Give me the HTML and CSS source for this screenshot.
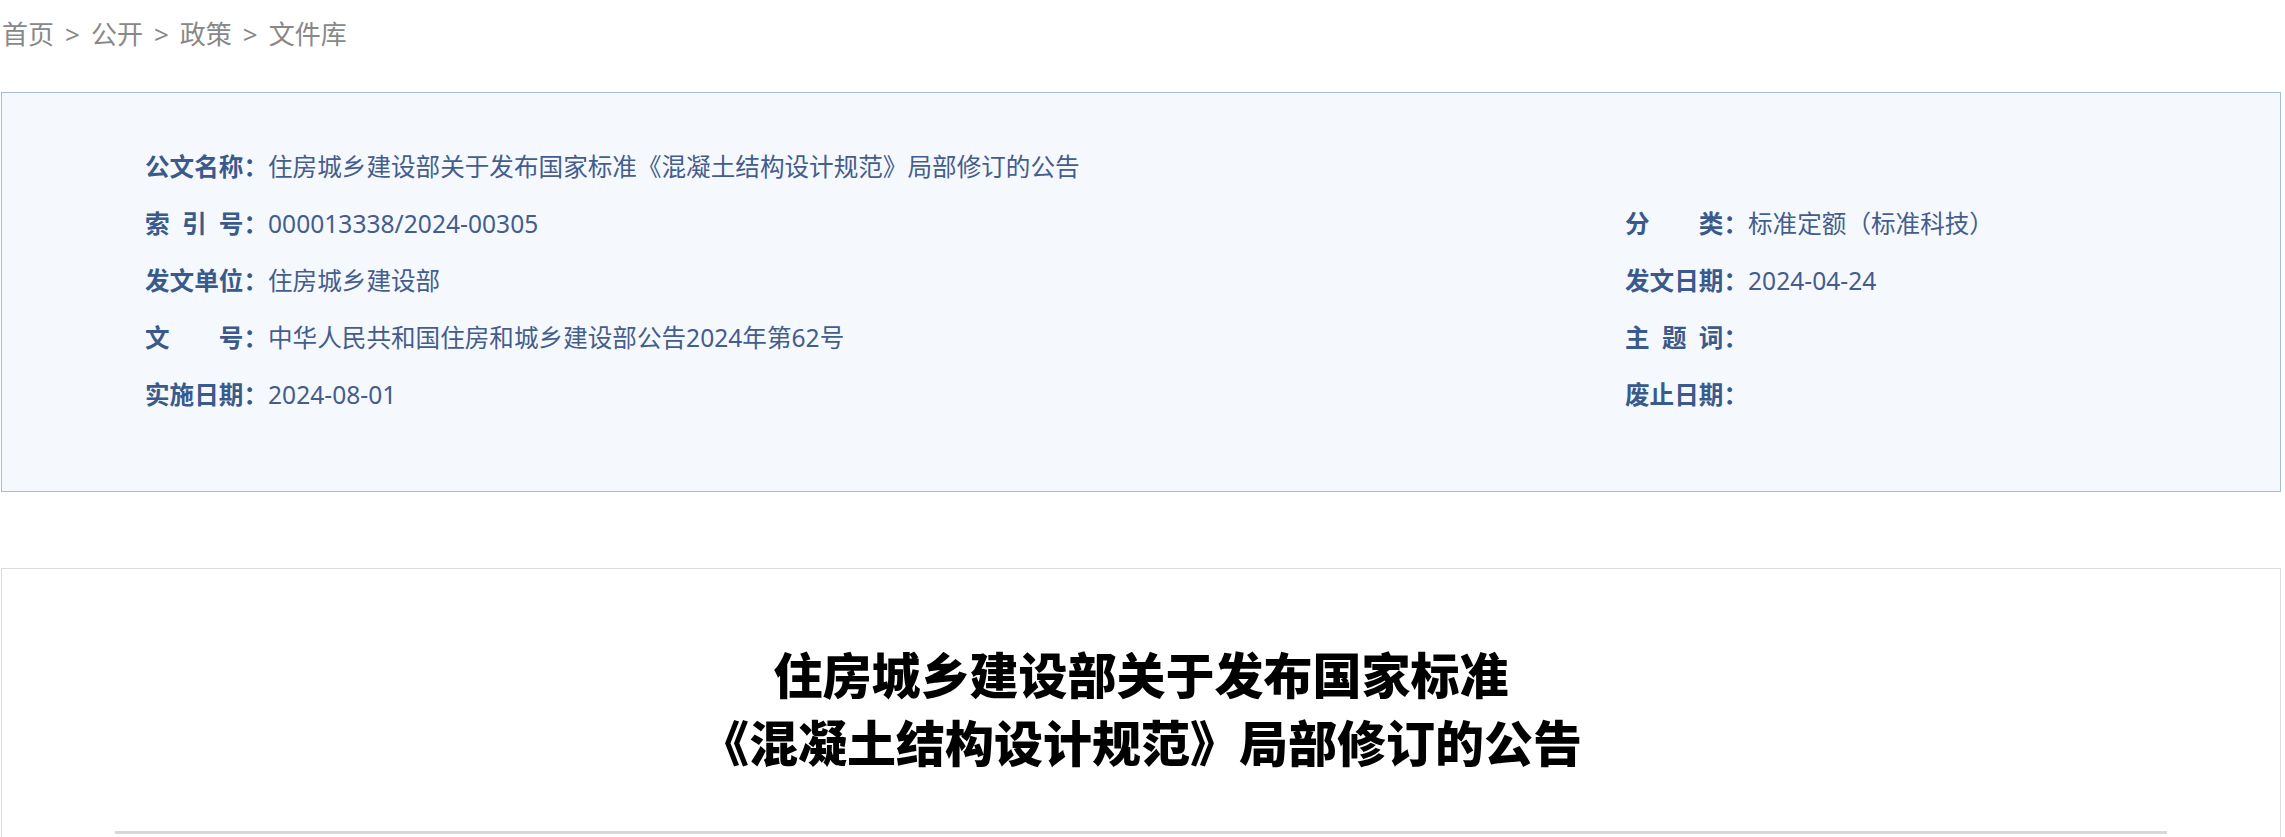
FILE: index.html
```html
<!DOCTYPE html>
<html lang="zh-CN">
  <head>
    <meta charset="UTF-8" />
    <meta name="viewport" content="width=device-width, initial-scale=1.0" />
    <title>住房城乡建设部关于发布国家标准《混凝土结构设计规范》局部修订的公告</title>
    <link rel="stylesheet" href="styles.css">
  </head>
  <body>
    <div class="page">
      <div class="crumb">
        <a href="#">首页</a><span class="sep">&gt;</span><a href="#">公开</a><span class="sep">&gt;</span><a href="#">政策</a><span class="sep">&gt;</span><a href="#">文件库</a>
      </div>

      <!-- document meta info -->
      <div class="meta">
        <div class="item full">
          <span class="label">公文名称</span><span class="colon">：</span><span class="value">住房城乡建设部关于发布国家标准《混凝土结构设计规范》局部修订的公告</span>
        </div>
        <div class="item">
          <span class="label">索引号</span><span class="colon">：</span><span class="value">000013338/2024-00305</span>
        </div>
        <div class="item">
          <span class="label">分类</span><span class="colon">：</span><span class="value">标准定额（标准科技）</span>
        </div>
        <div class="item">
          <span class="label">发文单位</span><span class="colon">：</span><span class="value">住房城乡建设部</span>
        </div>
        <div class="item">
          <span class="label">发文日期</span><span class="colon">：</span><span class="value">2024-04-24</span>
        </div>
        <div class="item">
          <span class="label">文号</span><span class="colon">：</span><span class="value">中华人民共和国住房和城乡建设部公告2024年第62号</span>
        </div>
        <div class="item">
          <span class="label">主题词</span><span class="colon">：</span><span class="value"></span>
        </div>
        <div class="item">
          <span class="label">实施日期</span><span class="colon">：</span><span class="value">2024-08-01</span>
        </div>
        <div class="item">
          <span class="label">废止日期</span><span class="colon">：</span><span class="value"></span>
        </div>
      </div>

      <div class="doc">
        <h1 class="doc-title">住房城乡建设部关于发布国家标准<br />《混凝土结构设计规范》局部修订的公告</h1>
        <div class="rule"></div>
        <div class="doc-body"></div>
      </div>
    </div>
  </body>
</html>
```

FILE: styles.css
```css
html,
body {
  margin: 0;
  padding: 0;
  background: #fff;
}
body {
  font-family: "Noto Sans CJK SC", "Noto Sans", sans-serif;
}

.page {
  width: 2280px;
  margin-left: 1px;
}

.crumb {
  height: 92px;
  padding-left: 1px;
  font-family: "Noto Sans", "Noto Sans CJK SC", sans-serif;
  font-size: 26px;
  line-height: 68px;
  color: #888;
}
.crumb a {
  color: #888;
  text-decoration: none;
}
.crumb .sep {
  padding: 0 11px;
}

.meta {
  display: grid;
  grid-template-columns: 1480px 1fr;
  grid-auto-rows: 57px;
  padding: 45px 0 68px 143px;
  border: 1px solid #a5bed2;
  background: #f5f9fe;
  font-family: "Noto Sans", "Noto Sans CJK SC", sans-serif;
  font-size: 24.6px;
  line-height: 57px;
  color: #40598a;
}
.meta .full {
  grid-column: 1 / -1;
}
.item {
  white-space: nowrap;
}
.label {
  display: inline-block;
  width: 4em;
  text-align: justify;
  text-align-last: justify;
  font-weight: bold;
  color: #3b5a8c;
}
.colon {
  font-weight: bold;
  color: #3b5a8c;
}
.value {
  color: #455d8c;
}

.doc {
  margin-top: 76px;
  padding: 70px 0 40px;
  border: 1px solid #dcdcdc;
  border-bottom: none;
}
.doc-title {
  margin: 0;
  font-size: 49px;
  line-height: 68px;
  font-weight: 900;
  text-align: center;
  color: #000;
}
.rule {
  height: 3px;
  margin: 56px 113px 0;
  background: #d6d9dc;
}
.doc-body {
  height: 40px;
}
```
